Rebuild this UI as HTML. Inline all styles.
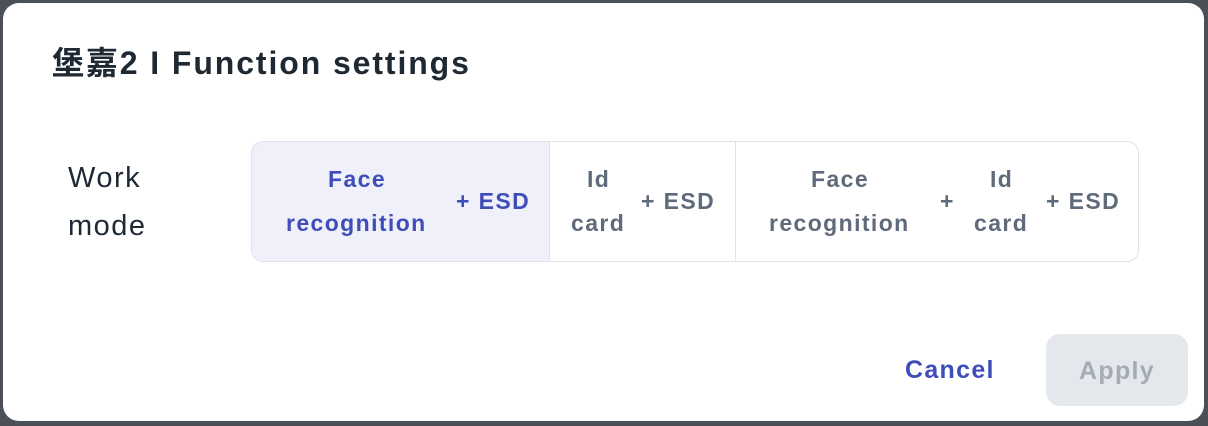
<!DOCTYPE html>
<html><head><meta charset="utf-8"><style>
body{margin:0;width:1208px;height:426px;background:#4b5058;position:relative;overflow:hidden;font-family:"Liberation Sans","Noto Sans CJK SC",sans-serif}
.dlg{position:absolute;left:3px;top:3px;width:1201px;height:418px;background:#fff;border-radius:16px}
.t{position:absolute;white-space:nowrap;line-height:1}
.title{left:52px;top:47px;font-size:32px;font-weight:bold;color:#1f2933;letter-spacing:1.9px}
.lbl{font-size:29px;color:#1f2933;letter-spacing:1.5px}
.seg{position:absolute;left:251px;top:141px;width:886px;height:119px;border:1px solid #dfe3ea;border-radius:12px;overflow:hidden}
.sel{position:absolute;left:0;top:0;width:297px;height:119px;background:#eff0fa;border-right:1px solid #dfe3ea}
.div2{position:absolute;left:483px;top:0;width:1px;height:119px;background:#dfe3ea}
.s{font-size:23px;font-weight:bold;color:#5f6b7a;letter-spacing:1.4px}
.b{color:#3f4db8}
.cancel{left:905px;top:358px;font-size:25px;font-weight:bold;color:#3f4db8;letter-spacing:1.3px}
.apply{position:absolute;left:1046px;top:334px;width:142px;height:72px;background:#e4e7eb;border-radius:14px;color:#a4acb7;font-size:25px;font-weight:bold;text-align:center;line-height:74px;letter-spacing:1.3px}
</style></head><body>
<div class="dlg"></div>
<div class="t title">堡嘉2 I Function settings</div>
<div class="t lbl" style="left:68px;top:164px">Work</div>
<div class="t lbl" style="left:68px;top:212px">mode</div>
<div class="seg"><div class="sel"></div><div class="div2"></div></div>
<div class="t s b" style="left:328px;top:168px">Face</div>
<div class="t s b" style="left:286px;top:212px">recognition</div>
<div class="t s b" style="left:456px;top:190px">+ ESD</div>
<div class="t s" style="left:587px;top:168px">Id</div>
<div class="t s" style="left:571px;top:212px">card</div>
<div class="t s" style="left:641px;top:190px">+ ESD</div>
<div class="t s" style="left:811px;top:168px">Face</div>
<div class="t s" style="left:769px;top:212px">recognition</div>
<div class="t s" style="left:940px;top:190px">+</div>
<div class="t s" style="left:990px;top:168px">Id</div>
<div class="t s" style="left:974px;top:212px">card</div>
<div class="t s" style="left:1046px;top:190px">+ ESD</div>
<div class="t cancel">Cancel</div>
<div class="apply">Apply</div>
</body></html>
